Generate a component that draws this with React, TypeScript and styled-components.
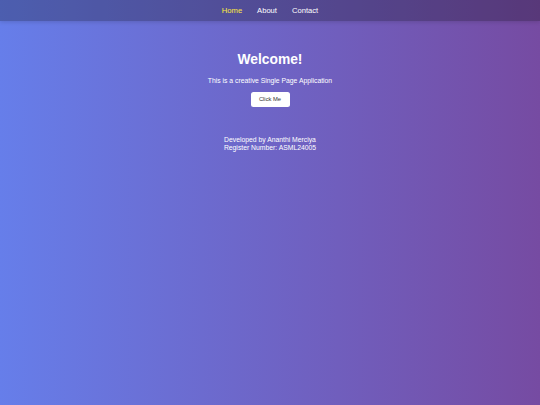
import * as React from "react";
import styled, { createGlobalStyle } from "styled-components";

const GlobalStyle = createGlobalStyle`
  html, body {
    margin: 0;
    padding: 0;
    height: 100%;
  }
  body {
    font-family: "Liberation Sans", Arial, sans-serif;
    background: linear-gradient(to right, #667eea, #764ba2);
    color: white;
    min-height: 405px;
  }
`;

const Page = styled.div`
  min-height: 405px;
  display: flex;
  flex-direction: column;
`;

const Navbar = styled.nav`
  height: 21px;
  display: flex;
  justify-content: center;
  align-items: center;
  gap: 15px;
  background-color: rgba(0, 0, 0, 0.25);
  box-shadow: 0 1px 4px rgba(0, 0, 0, 0.15);
`;

const NavLink = styled.a<{ active?: boolean }>`
  color: ${props => (props.active ? "#ffeb3b" : "white")};
  font-size: 7.6px;
  text-decoration: none;
  cursor: pointer;
`;

const Main = styled.main`
  display: flex;
  flex-direction: column;
  align-items: center;
  text-align: center;
  padding-top: 31px;
`;

const Title = styled.h1`
  margin: 0;
  font-size: 13.8px;
  font-weight: bold;
`;

const Text = styled.p`
  margin: 10px 0 0;
  font-size: 6.8px;
`;

const Button = styled.button`
  margin-top: 7.5px;
  width: 39px;
  height: 15px;
  padding: 0;
  border: none;
  border-radius: 2.5px;
  background: white;
  color: #333;
  font-family: "Liberation Sans", Arial, sans-serif;
  font-size: 5.8px;
  cursor: pointer;
`;

const Footer = styled.footer`
  margin-top: 29.5px;
  font-size: 6.8px;
  line-height: 8px;
`;

export default function App() {
  return (
    <>
      <GlobalStyle />
      <Page>
        <Navbar>
          <NavLink active>Home</NavLink>
          <NavLink>About</NavLink>
          <NavLink>Contact</NavLink>
        </Navbar>
        <Main>
          <Title>Welcome!</Title>
          <Text>This is a creative Single Page Application</Text>
          <Button>Click Me</Button>
          <Footer>
            Developed by Ananthi Merciya
            <br />
            Register Number: ASML24005
          </Footer>
        </Main>
      </Page>
    </>
  );
}
